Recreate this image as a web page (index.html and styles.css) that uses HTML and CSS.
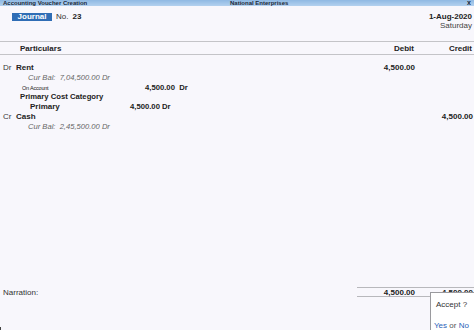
FILE: index.html
```html
<!DOCTYPE html>
<html lang="en">

<head>
    <meta charset="UTF-8">
    <title>Accounting Voucher Creation</title>
    <link rel="stylesheet" href="styles.css">
</head>

<body>
    <div class="titlebar">
        <span class="title-left">Accounting Voucher Creation</span>
        <span class="title-mid">National Enterprises</span>
        <span class="title-close">x</span>
    </div>

    <div class="voucher-head">
        <div class="voucher-type">
            <span class="type-box">Journal</span>
            <span class="no-label">No.</span>
            <span class="no-value">23</span>
        </div>
        <div class="voucher-date">
            <div class="date">1-Aug-2020</div>
            <div class="day">Saturday</div>
        </div>
    </div>

    <div class="col-head">
        <span class="col-part">Particulars</span>
        <span class="col-amt">Debit</span>
        <span class="col-amt">Credit</span>
    </div>

    <div class="entries">
        <div class="row">
            <span class="drcr">Dr</span>
            <span class="ledger">Rent</span>
            <span class="col-amt">4,500.00</span>
            <span class="col-amt"></span>
        </div>
        <div class="row bal">Cur Bal: &nbsp;7,04,500.00 Dr</div>
        <div class="row sub">
            <span class="ref">On Account</span>
            <span class="ref-amt">4,500.00 &nbsp;Dr</span>
        </div>
        <div class="row cat">Primary Cost Category</div>
        <div class="row sub">
            <span class="cc">Primary</span>
            <span class="cc-amt">4,500.00 Dr</span>
        </div>
        <div class="row">
            <span class="drcr">Cr</span>
            <span class="ledger">Cash</span>
            <span class="col-amt"></span>
            <span class="col-amt">4,500.00</span>
        </div>
        <div class="row bal">Cur Bal: &nbsp;2,45,500.00 Dr</div>
    </div>

    <div class="footer">
        <span class="narration">Narration:</span>
        <div class="totals">
            <span class="col-amt">4,500.00</span>
            <span class="col-amt">4,500.00</span>
        </div>
    </div>

    <div class="accept">
        <div class="accept-q">Accept ?</div>
        <div class="accept-opts"><span class="opt">Yes</span> or <span class="opt">No</span></div>
    </div>
    <div class="corner"></div>
</body>

</html>
```

FILE: styles.css
```css
body {
    margin: 0;
    width: 474px;
    height: 330px;
    overflow: hidden;
    position: relative;
    background-color: #f8f7fc;
    font-family: "Liberation Sans", Arial, sans-serif;
    font-size: 8px;
    color: #222;
    display: flex;
    flex-direction: column;
}

.titlebar {
    height: 6px;
    background: linear-gradient(#8fb9e3, #b3d1ef);
    display: flex;
    align-items: center;
    font-size: 6px;
    font-weight: bold;
    color: #1c2a3a;
    padding: 0 3px;
    line-height: 6px;
}

.title-left {
    width: 227px;
}

.title-mid {
    flex: 1;
}

.title-close {
    font-size: 7px;
}

.voucher-head {
    display: flex;
    justify-content: space-between;
    padding: 6px 2px 0 12px;
    height: 29px;
}

.voucher-type {
    display: flex;
    align-items: center;
    height: 9px;
}

.type-box {
    background-color: #2f6db5;
    color: #fff;
    font-weight: bold;
    width: 40px;
    height: 8px;
    line-height: 8px;
    text-align: center;
    margin-right: 4px;
}

.no-label {
    color: #333;
    margin-right: 4px;
}

.no-value {
    font-weight: bold;
}

.voucher-date {
    text-align: right;
}

.date {
    font-weight: bold;
    line-height: 9px;
}

.day {
    color: #444;
    line-height: 9px;
}

.col-head {
    display: flex;
    border-top: 1px solid #c4c4c8;
    border-bottom: 1px solid #c4c4c8;
    height: 12px;
    line-height: 13px;
    font-weight: bold;
    padding-right: 2px;
}

.col-part {
    flex: 1;
    padding-left: 20px;
}

.col-amt {
    width: 58px;
    text-align: right;
    font-weight: bold;
}

.entries {
    padding-top: 8px;
}

.row {
    display: flex;
    height: 9.75px;
    line-height: 10px;
    padding-right: 1px;
}

.drcr {
    width: 13px;
    padding-left: 3px;
    color: #3a3a3a;
}

.ledger {
    flex: 1;
    font-weight: bold;
}

.bal {
    padding-left: 28px;
    font-style: italic;
    font-size: 7.6px;
    color: #666;
}

.ref {
    width: 123px;
    padding-left: 22px;
    font-size: 5.5px;
    letter-spacing: -0.2px;
}

.ref-amt {
    font-weight: bold;
    font-size: 7.7px;
}

.cat {
    padding-left: 20px;
    font-weight: bold;
    font-size: 7.7px;
}

.cc {
    width: 100px;
    padding-left: 30px;
    font-weight: bold;
}

.cc-amt {
    font-weight: bold;
    font-size: 7.7px;
}

.footer {
    margin-top: auto;
    margin-bottom: 33px;
    display: flex;
    align-items: center;
}

.narration {
    flex: 1;
    padding-left: 3px;
    color: #333;
}

.totals {
    display: flex;
    justify-content: flex-end;
    width: 116px;
    border-top: 1px solid #b8b8bc;
    border-bottom: 1px solid #b8b8bc;
    height: 8px;
    line-height: 9px;
    padding-right: 1px;
}

.accept {
    position: absolute;
    left: 430px;
    top: 292px;
    width: 50px;
    height: 45px;
    background-color: #fff;
    border: 1px solid #9a9a9e;
    color: #333;
}

.accept-q {
    padding: 7px 0 0 5px;
}

.accept-opts {
    padding: 12px 0 0 3px;
    color: #555;
}

.opt {
    color: #2a62b8;
}

.corner {
    position: absolute;
    left: 0;
    top: 327px;
    width: 1px;
    height: 3px;
    background-color: #444;
}
```
